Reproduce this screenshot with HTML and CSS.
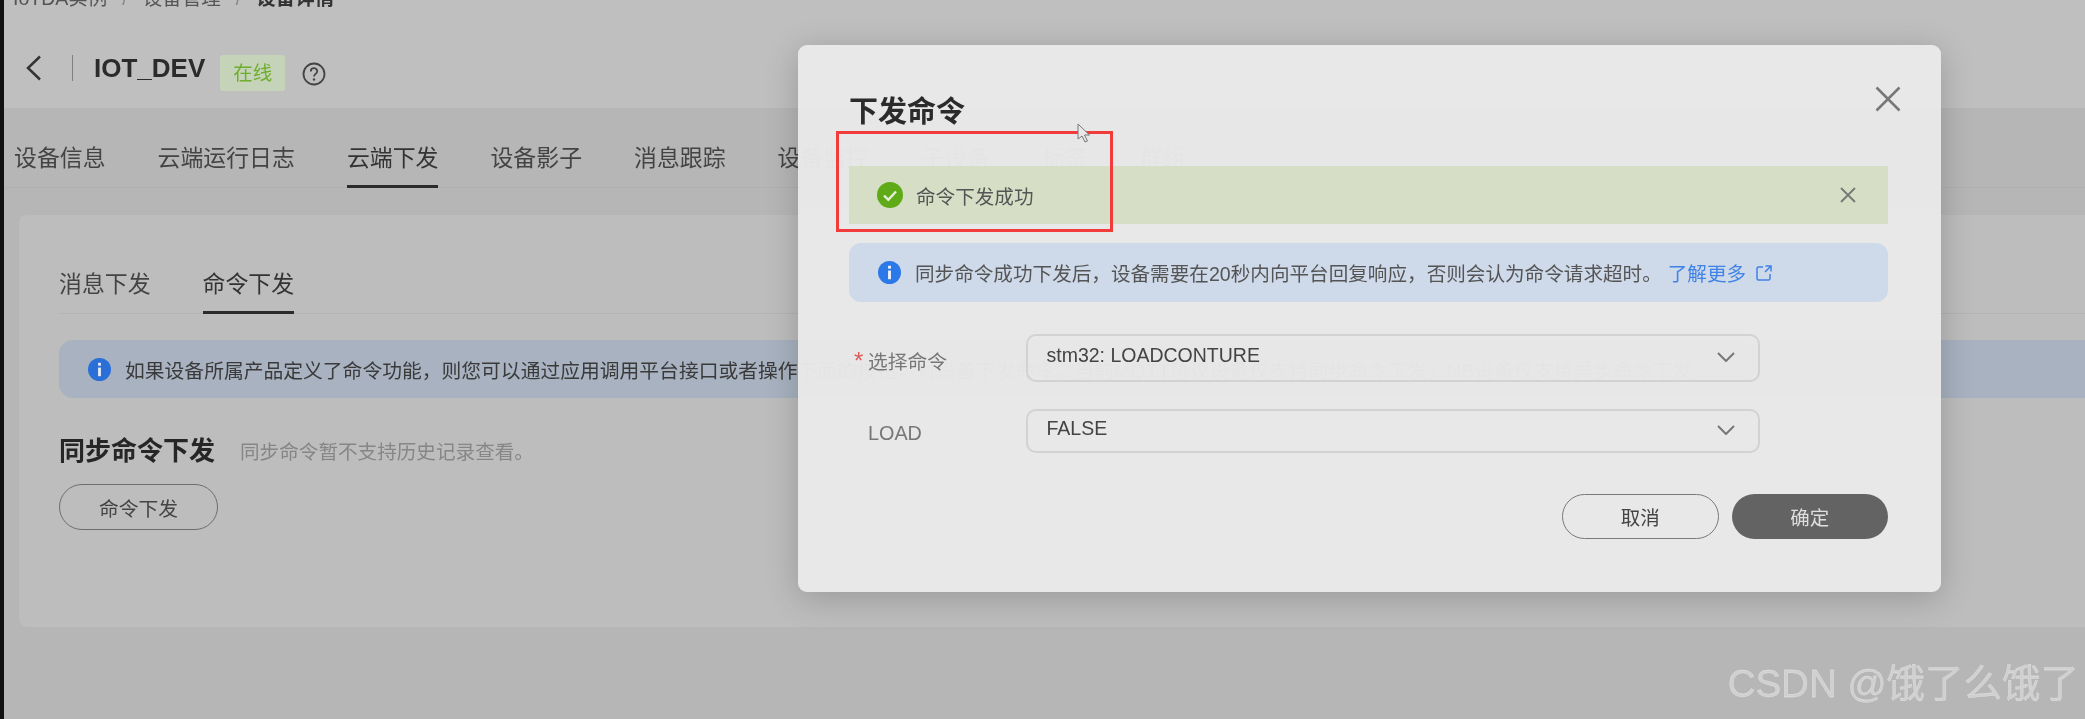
FILE: index.html
```html
<!DOCTYPE html>
<html>
<head>
    <title>设备详情</title>
    <link rel="stylesheet" href="styles.css">
</head>
<body>
    <div class="page">
        <div class="head">
            <div class="crumbs">
                <span>IoTDA实例</span><i>/</i><span>设备管理</span><i>/</i><b>设备详情</b>
            </div>
            <div class="title-row">
                <svg class="back" width="18" height="26" viewBox="0 0 18 26"><path d="M15 1.5 3 13l12 11.500"/></svg>
                <span class="title-sep"></span>
                <span class="dev-name">IOT_DEV</span>
                <span class="badge">在线</span>
                <svg class="help" width="24" height="24" viewBox="0 0 24 24">
                    <circle cx="12" cy="12" r="10.500"/>
                    <path d="M8.800 9.400c0-4.200 6.400-4.200 6.400-.2 0 2.600-3.200 2.700-3.200 5.400"/>
                    <circle class="help-dot" cx="12" cy="17.500" r="1.200"/>
                </svg>
            </div>
        </div>
        <div class="tabs">
            <a>设备信息</a>
            <a>云端运行日志</a>
            <a class="active">云端下发</a>
            <a>设备影子</a>
            <a>消息跟踪</a>
            <a>设备监控</a>
            <a>子设备</a>
            <a>标签</a>
            <a>群组</a>
        </div>
        <div class="panel">
            <div class="subtabs">
                <a>消息下发</a>
                <a class="active">命令下发</a>
            </div>
            <div class="notice">
                <svg class="info-icon" width="23" height="23" viewBox="0 0 24 24">
                    <circle cx="12" cy="12" r="12" fill="#2a6fd8"/>
                    <rect x="10.500" y="10" width="3" height="9" fill="#e4e9f2"/>
                    <rect x="10.500" y="5" width="3" height="3" fill="#e4e9f2"/>
                </svg>
                <span>如果设备所属产品定义了命令功能，则您可以通过应用调用平台接口或者操作下面的按钮，对设备下发命令。当前MQTT协议设备仅支持同步命令下发，NB设备仅支持异步命令下发。</span>
            </div>
            <div class="section-head">
                <h2>同步命令下发</h2>
                <span>同步命令暂不支持历史记录查看。</span>
            </div>
            <button type="button" class="btn-outline">命令下发</button>
        </div>

        <div class="dialog">
            <h3>下发命令</h3>
            <svg class="dialog-close" width="26" height="26" viewBox="0 0 26 26"><path d="M1.500 1.500l23 23M24.500 1.500l-23 23"/></svg>
            <div class="alert alert-ok">
                <svg width="26" height="26" viewBox="0 0 26 26">
                    <circle cx="13" cy="13" r="13" fill="#5eaa17"/>
                    <path d="M7 13.500l4.300 4.300L19 9.500" fill="none" stroke="#e6eedc" stroke-width="2.400"/>
                </svg>
                <span>命令下发成功</span>
                <svg class="alert-close" width="18" height="18" viewBox="0 0 18 18"><path d="M2 2l14 14M16 2 2 16"/></svg>
            </div>
            <div class="alert alert-info">
                <svg width="23" height="23" viewBox="0 0 24 24">
                    <circle cx="12" cy="12" r="12" fill="#2b78e8"/>
                    <rect x="10.500" y="10" width="3" height="9" fill="#eef2f8"/>
                    <rect x="10.500" y="5" width="3" height="3" fill="#eef2f8"/>
                </svg>
                <span>同步命令成功下发后，设备需要在20秒内向平台回复响应，否则会认为命令请求超时。</span>
                <a class="more">了解更多</a>
                <svg class="ext" width="16" height="16" viewBox="0 0 16 16"><path d="M7 2H2.500A1.500 1.500 0 0 0 1 3.500v10A1.500 1.500 0 0 0 2.500 15h10a1.500 1.500 0 0 0 1.500-1.500V9M9.500 1H15v5.500M15 1 9 7"/></svg>
            </div>
            <div class="form-row row-cmd">
                <label><span class="req">*</span>选择命令</label>
                <div class="select">
                    <span>stm32: LOADCONTURE</span>
                    <svg width="18" height="10" viewBox="0 0 18 10"><path d="M1 1l8 8 8-8"/></svg>
                </div>
            </div>
            <div class="form-row row-load">
                <label>LOAD</label>
                <div class="select">
                    <span>FALSE</span>
                    <svg width="18" height="10" viewBox="0 0 18 10"><path d="M1 1l8 8 8-8"/></svg>
                </div>
            </div>
            <div class="dialog-foot">
                <button type="button" class="btn-cancel">取消</button>
                <button type="button" class="btn-ok">确定</button>
            </div>
        </div>

        <div class="red-box"></div>
        <svg class="cursor" width="15" height="21" viewBox="0 0 15 21"><path d="M1 1v15l4-3 3 6 2.500-1-3-6h5z"/></svg>
        <div class="watermark">CSDN @饿了么饿了</div>
    </div>
</body>
</html>
```

FILE: styles.css
```css
html, body {
    margin: 0;
    padding: 0;
    background-color: #111;
}
body {
    font-family: "Liberation Sans", "Noto Sans CJK SC", sans-serif;
    overflow: hidden;
}
.page {
    position: relative;
    height: 719px;
    margin-left: 4px;
    overflow: hidden;
    background-color: #b6b6b6;
    color: #333;
    filter: blur(0.5px);
}
svg path {
    fill: none;
}

/* header */
.head {
    display: flow-root;
    height: 108px;
    background-color: #bfbfbf;
}
.crumbs {
    display: flex;
    align-items: center;
    gap: 15px;
    height: 24px;
    margin-top: -14px;
    padding-left: 9px;
    font-size: 19.5px;
    line-height: 24px;
    color: #555;
}
.crumbs i {
    font-style: normal;
    color: #888;
}
.crumbs b {
    color: #333;
}
.title-row {
    display: flex;
    align-items: center;
    height: 36px;
    margin-top: 45px;
    padding-left: 21px;
}
.back {
    margin-top: -10px;
}
.back path {
    stroke: #333;
    stroke-width: 2.500;
}
.title-sep {
    width: 1px;
    height: 26px;
    margin-top: -10px;
    margin-left: 29px;
    background-color: #808080;
}
.dev-name {
    margin-left: 21px;
    margin-top: -10px;
    font-size: 26px;
    font-weight: bold;
    color: #2b2b2b;
}
.badge {
    display: block;
    width: 65px;
    height: 36px;
    margin-left: 15px;
    border-radius: 3px;
    background-color: #c5d3b8;
    color: #6fae2f;
    font-size: 19.500px;
    line-height: 36px;
    text-align: center;
}
.help {
    margin-left: 17px;
    margin-top: 2px;
}
.help circle, .help path {
    stroke: #444;
    stroke-width: 1.800;
    fill: none;
}
.help .help-dot {
    fill: #444;
    stroke: none;
}

/* main tabs */
.tabs {
    display: flex;
    gap: 52px;
    height: 79px;
    padding-left: 10px;
    border-bottom: 1px solid #b0b0b0;
}
.tabs a, .subtabs a {
    display: block;
    font-size: 22.900px;
    color: #444;
    box-sizing: border-box;
}
.tabs a {
    height: 80px;
    padding-top: 33px;
    line-height: 34px;
}
.tabs a.active, .subtabs a.active {
    color: #333;
    border-bottom: 3px solid #2b2b2b;
}

/* content panel */
.panel {
    height: 412px;
    margin-top: 27px;
    margin-left: 15px;
    padding-left: 40px;
    border-radius: 8px 0 0 8px;
    background-color: #bdbdbd;
}
.subtabs {
    display: flex;
    gap: 52px;
    height: 98px;
    border-bottom: 1px solid #b4b4b4;
}
.subtabs a {
    height: 99px;
    padding-top: 52px;
    line-height: 34px;
}
.notice {
    display: flex;
    align-items: center;
    height: 58px;
    margin-top: 26px;
    padding-left: 29px;
    border-radius: 14px 0 0 14px;
    background-color: #a8b2c0;
    font-size: 19.800px;
    color: #3a3a3a;
    white-space: nowrap;
}
.info-icon {
    flex: none;
    margin-right: 14px;
}
.section-head {
    display: flex;
    align-items: center;
    gap: 25px;
    height: 40px;
    margin-top: 30px;
}
.section-head h2 {
    margin: 0;
    font-size: 26px;
    font-weight: bold;
    color: #262626;
}
.section-head span {
    margin-top: 5px;
    font-size: 19.600px;
    color: #868686;
}
.btn-outline {
    display: block;
    width: 159px;
    height: 46px;
    margin-top: 16px;
    padding: 0;
    border: 1.500px solid #6e6e6e;
    border-radius: 23px;
    background: transparent;
    font: inherit;
    font-size: 19.800px;
    color: #444;
}

/* dialog */
.dialog {
    position: absolute;
    left: 794px;
    top: 45px;
    box-sizing: border-box;
    width: 1143px;
    height: 547px;
    padding: 48px 53px 0 51px;
    border-radius: 9px;
    background-color: rgba(232, 232, 232, 0.975);
    box-shadow: 0 6px 34px rgba(0, 0, 0, 0.2);
}
.dialog h3 {
    margin: 0 0 35px;
    font-size: 29px;
    line-height: 38px;
    font-weight: bold;
    color: #2b2b2b;
}
.dialog-close {
    position: absolute;
    top: 41px;
    right: 40px;
}
.dialog-close path {
    stroke: #777;
    stroke-width: 2.500;
}
.alert {
    display: flex;
    align-items: center;
    box-sizing: border-box;
    font-size: 19.600px;
    color: #555;
    white-space: nowrap;
}
.alert-ok {
    height: 58px;
    padding: 0 31px 0 28px;
    background-color: #d6dfc5;
}
.alert-ok span {
    margin-left: 13px;
}
.alert-close {
    margin-left: auto;
}
.alert-close path {
    stroke: #777;
    stroke-width: 1.800;
}
.alert-info {
    height: 59px;
    margin-top: 19px;
    padding: 0 0 0 29px;
    border-radius: 12px;
    background-color: #ced9e9;
}
.alert-info span {
    margin-left: 14px;
}
.more {
    margin-left: 6px;
    color: #3f83e6;
}
.ext {
    margin-left: 10px;
}
.ext path {
    stroke: #3f83e6;
    stroke-width: 1.500;
}
.form-row {
    display: flex;
    align-items: center;
}
.row-cmd {
    height: 48px;
    margin-top: 32px;
}
.row-load {
    height: 44px;
    margin-top: 27px;
}
.form-row label {
    box-sizing: border-box;
    width: 176.500px;
    padding: 4px 0 0 19px;
    font-size: 19.800px;
    color: #777;
}
.req {
    display: inline-block;
    width: 14px;
    margin-left: -14px;
    font-size: 24px;
    line-height: 20px;
    color: #e05a5a;
}
.select {
    display: flex;
    align-items: center;
    justify-content: space-between;
    box-sizing: border-box;
    width: 734.500px;
    height: 100%;
    padding: 0 23px 5px 19px;
    border: 2px solid #d2d2d2;
    border-radius: 10px;
    font-size: 19.500px;
    color: #444;
}
.select svg {
    margin-top: 2px;
}
.select path {
    stroke: #777;
    stroke-width: 2;
}
.dialog-foot {
    display: flex;
    justify-content: flex-end;
    gap: 13px;
    margin-top: 41px;
}
.dialog-foot button {
    width: 156.500px;
    height: 45px;
    padding: 0;
    border-radius: 23px;
    font: inherit;
    font-size: 19.500px;
}
.btn-cancel {
    border: 1.500px solid #7a7a7a;
    background: transparent;
    color: #444;
}
.btn-ok {
    border: none;
    background-color: #636363;
    color: #dedede;
}

/* things drawn on top of the screenshot */
.red-box {
    position: absolute;
    left: 832px;
    top: 131px;
    box-sizing: border-box;
    width: 277px;
    height: 101px;
    border: 3px solid #f23c3c;
}
.cursor {
    position: absolute;
    left: 1073px;
    top: 123px;
}
.cursor path {
    fill: #e8e8e8;
    stroke: #777;
    stroke-width: 1;
}
.watermark {
    position: absolute;
    right: 6px;
    top: 657px;
    font-size: 38.500px;
    line-height: 54px;
    color: #d0d0d0;
    -webkit-text-stroke: 0.3px #e4e4e4;
    white-space: nowrap;
}
```
